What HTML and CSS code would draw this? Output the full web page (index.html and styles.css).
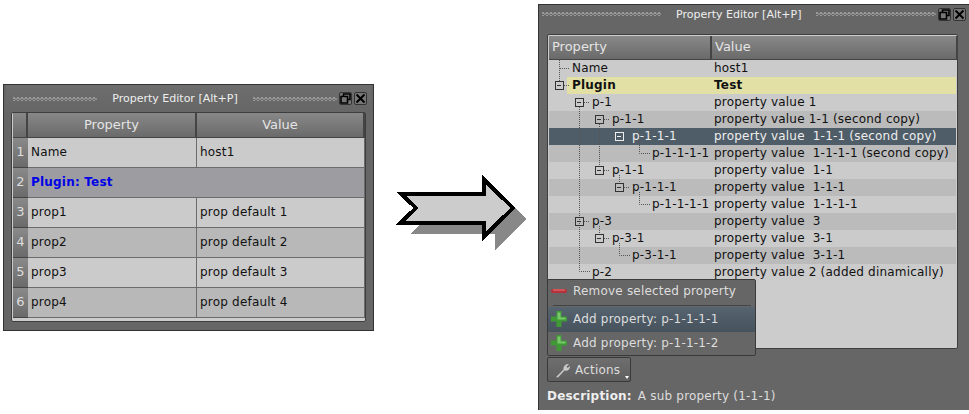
FILE: index.html
```html
<!DOCTYPE html>
<html>
<head>
<title>Property Editor</title>
<link rel="stylesheet" href="styles.css">
</head>
<body>
    <!-- before: plain table -->
    <div class="window window_left">
        <div class="titlebar">
            <span class="grip"></span>
            <span class="title">Property Editor [Alt+P]</span>
            <span class="grip"></span>
            <span class="win_btn"><svg width="11" height="11" viewBox="0 0 11 11"><path d="M3.5 3V1H10V6.5H7.5M1 3.5H7.5V10H1Z" fill="none" stroke="#000" stroke-width="1.6"/></svg></span>
            <span class="win_btn"><svg width="11" height="11" viewBox="0 0 11 11"><path d="M1.5 1.5L9.5 9.5M9.5 1.5L1.5 9.5" stroke="#000" stroke-width="2"/></svg></span>
        </div>
        <div class="frame">
            <div class="plain_table">
                <div class="head"></div><div class="head">Property</div><div class="head">Value</div>
                <div class="num">1</div><div class="cell">Name</div><div class="cell">host1</div>
                <div class="num">2</div><div class="cell group">Plugin: Test</div>
                <div class="num">3</div><div class="cell">prop1</div><div class="cell">prop default 1</div>
                <div class="num">4</div><div class="cell alt">prop2</div><div class="cell alt">prop default 2</div>
                <div class="num">5</div><div class="cell">prop3</div><div class="cell">prop default 3</div>
                <div class="num">6</div><div class="cell alt">prop4</div><div class="cell alt">prop default 4</div>
            </div>
        </div>
    </div>

    <svg class="arrow" width="140" height="80" viewBox="390 170 140 80" shape-rendering="crispEdges">
        <path d="M409 233L424 219H495V189L526 218L494 249V233Z" fill="#888"/>
        <path d="M400 192.500H483V178.500L512 207L483 235.500V221.500H400L415 207Z" fill="#ccc" stroke="#000" stroke-width="4"/>
    </svg>

    <!-- after: tree -->
    <div class="window window_right">
        <div class="titlebar">
            <span class="grip"></span>
            <span class="title">Property Editor [Alt+P]</span>
            <span class="grip"></span>
            <span class="win_btn"><svg width="11" height="11" viewBox="0 0 11 11"><path d="M3.5 3V1H10V6.5H7.5M1 3.5H7.5V10H1Z" fill="none" stroke="#000" stroke-width="1.6"/></svg></span>
            <span class="win_btn"><svg width="11" height="11" viewBox="0 0 11 11"><path d="M1.5 1.5L9.5 9.5M9.5 1.5L1.5 9.5" stroke="#000" stroke-width="2"/></svg></span>
        </div>
        <div class="frame tree_frame">
            <div class="tree_head">
                <div class="head">Property</div><div class="head">Value</div>
            </div>
            <div class="tree">
                <div class="row"><div class="lv0">Name</div><div>host1</div></div>
                <div class="row plugin"><div class="lv0">Plugin</div><div>Test</div></div>
                <div class="row"><div class="lv1">p-1</div><div>property value 1</div></div>
                <div class="row dark"><div class="lv2">p-1-1</div><div>property value 1-1 (second copy)</div></div>
                <div class="row selected"><div class="lv3">p-1-1-1</div><div>property value  1-1-1 (second copy)</div></div>
                <div class="row dark"><div class="lv4">p-1-1-1-1</div><div>property value  1-1-1-1 (second copy)</div></div>
                <div class="row"><div class="lv2">p-1-1</div><div>property value  1-1</div></div>
                <div class="row dark"><div class="lv3">p-1-1-1</div><div>property value  1-1-1</div></div>
                <div class="row"><div class="lv4">p-1-1-1-1</div><div>property value  1-1-1-1</div></div>
                <div class="row dark"><div class="lv1">p-3</div><div>property value  3</div></div>
                <div class="row"><div class="lv2">p-3-1</div><div>property value  3-1</div></div>
                <div class="row dark"><div class="lv3">p-3-1-1</div><div>property value  3-1-1</div></div>
                <div class="row"><div class="lv1">p-2</div><div>property value 2 (added dinamically)</div></div>
                <svg class="tree_lines" width="110" height="221" viewBox="549 60 110 221">
                    <path class="dots" d="M559.500 60V81M560 68.500H570M564 85.500H570M579.500 107V271.500H590M584 102.500H590M599.500 124V165M604 119.500H610M639.500 141V153.500H650M604 170.500H610M619.500 175V182M624 187.500H630M639.500 192V204.500H650M584 221.500H590M599.500 226V233M604 238.500H610M619.500 243V255.500H630"/>
                    <path class="box" d="M555 81.500h8v8h-8zM557 85.500h4M575 98.500h8v8h-8zM577 102.500h4M595 115.500h8v8h-8zM597 119.500h4M595 166.500h8v8h-8zM597 170.500h4M615 183.500h8v8h-8zM617 187.500h4M575 217.500h8v8h-8zM577 221.500h4M595 234.500h8v8h-8zM597 238.500h4"/>
                    <path class="box box_sel" d="M615 132.500h8v8h-8zM617 136.500h4"/>
                </svg>
            </div>
        </div>
        <div class="actions_bar">
            <div class="menu">
                <div class="menu_item">
                    <svg width="18" height="10" viewBox="0 0 18 10"><rect x="1" y="3" width="16" height="4" rx="2" fill="#b8303a"/><rect x="3" y="3.500" width="12" height="1" fill="#e87a7a"/></svg>
                    <span>Remove selected property</span>
                </div>
                <div class="menu_sep"></div>
                <div class="menu_item active">
                    <svg width="18" height="18" viewBox="0 0 18 18"><path d="M6.500 1H11.500V6.500H17V11.500H11.500V17H6.500V11.500H1V6.500H6.500Z" fill="#3f9a36"/><path d="M7.500 2.500H10.500V7.500H15.500V9.500H7.500Z" fill="#78c868"/></svg>
                    <span>Add property: p-1-1-1-1</span>
                </div>
                <div class="menu_item">
                    <svg width="18" height="18" viewBox="0 0 18 18"><path d="M6.500 1H11.500V6.500H17V11.500H11.500V17H6.500V11.500H1V6.500H6.500Z" fill="#3f9a36"/><path d="M7.500 2.500H10.500V7.500H15.500V9.500H7.500Z" fill="#78c868"/></svg>
                    <span>Add property: p-1-1-1-2</span>
                </div>
            </div>
            <div class="actions_btn">
                <svg width="16" height="16" viewBox="0 0 16 16"><path d="M1 15L8.500 7.500C8 4.500 10.500 1.500 14 2L11.500 4.500L12.500 6L15 4C15 7.500 12.500 9.500 9.500 8.500L3 15.500Z" fill="#c8c8c8"/></svg>
                <span>Actions</span>
                <i class="caret"></i>
            </div>
        </div>
        <div class="description"><b>Description:</b><span>A sub property (1-1-1)</span></div>
    </div>
</body>
</html>
```

FILE: styles.css
```css
html, body {
    margin: 0;
    height: 100%;
    overflow: hidden;
    background-color: #fff;
}
body {
    font-family: "DejaVu Sans", sans-serif;
    font-size: 12px;
    letter-spacing: 0.2px;
}

.window {
    position: absolute;
    box-sizing: border-box;
    background-color: #666;
    border: 1px solid #333;
    color: #111;
}
.window_left {
    left: 3px;
    top: 84px;
    width: 371px;
    height: 247px;
    padding: 0 7px;
}
.window_right {
    left: 538px;
    top: 4px;
    width: 440px;
    height: 406px;
    padding: 0 8px;
    border-bottom: none;
}

.titlebar {
    display: flex;
    align-items: center;
    height: 27px;
    gap: 2px;
    color: #eee;
    font-size: 11px;
    letter-spacing: 0;
    white-space: nowrap;
}
.window_left .titlebar {
    background: linear-gradient(#6e6e6e, #666);
    margin: 0 -5px;
    padding: 0 4px 0 7px;
}
.window_right .titlebar {
    height: 18px;
    margin: 0 -7px 11px;
    padding: 0 0 0 2px;
}
.grip {
    flex: 1;
    height: 4px;
    background-image:
        radial-gradient(circle at 1px 1px, #999 0, #999 1px, transparent 1px),
        radial-gradient(circle at 1px 1px, #8c8c8c 0, #8c8c8c 1px, transparent 1px);
    background-size: 4px 3px;
    background-position: 0 0, 2px 1px;
}
.window_right .grip {
    flex: none;
    width: 120px;
}
.window_right .grip:first-child {
    width: 119px;
}
.title {
    padding: 0 13px;
}
.win_btn {
    display: flex;
    align-items: center;
    justify-content: center;
    box-sizing: border-box;
    width: 13px;
    height: 13px;
    border: 1px solid #333;
    border-radius: 2px;
    background-color: #777;
}

.frame {
    box-sizing: border-box;
    width: 355px;
    height: 210px;
    padding: 0 1px;
    background-color: #ccc;
    border: 1px solid #3e3e3e;
    border-radius: 2px;
}
.plain_table {
    display: grid;
    grid-template-columns: 15px 169px 168px;
    grid-template-rows: 25px;
    grid-auto-rows: 30px;
    background-color: #6c6c6c;
}
.head {
    display: flex;
    align-items: center;
    justify-content: center;
    box-sizing: border-box;
    padding-bottom: 2px;
    color: #e4e4e4;
    font-size: 13px;
    letter-spacing: 0;
    background: linear-gradient(#888, #6a6a6a);
    border-right: 2px solid #444;
    border-bottom: 1px solid #444;
}
.num {
    display: flex;
    align-items: center;
    justify-content: center;
    box-sizing: border-box;
    padding-bottom: 2px;
    color: #ddd;
    font-size: 13px;
    background: linear-gradient(#8a8a8a, #6a6a6a);
    border-bottom: 1px solid #444;
}
.cell {
    display: flex;
    align-items: center;
    box-sizing: border-box;
    padding: 0 0 2px 3px;
    background-color: #cbcbcb;
    border-right: 1px solid #6c6c6c;
    border-bottom: 1px solid #6c6c6c;
}
.cell.alt {
    background-color: #b8b8b8;
}
.cell.group {
    grid-column: span 2;
    background-color: #9d9da1;
    color: #0000e6;
    font-weight: bold;
}

.tree_frame {
    width: 411px;
    height: 315px;
    padding: 1px;
}
.tree_head {
    display: grid;
    grid-template-columns: 163px 246px;
}
.tree_head .head {
    justify-content: flex-start;
    padding-left: 3px;
    height: 24px;
}
.tree {
    position: relative;
}
.row {
    display: grid;
    grid-template-columns: 163px 246px;
    height: 17px;
    line-height: 17px;
    white-space: pre;
    background-color: #cbcbcb;
    color: #111;
}
.row > div:last-child {
    padding-left: 2px;
}
.row.dark {
    background-color: #bbb;
}
.row.selected {
    background-color: #4f5d68;
    color: #eee;
}
.row.plugin {
    background: linear-gradient(to right, #cbcbcb 18px, #e3e0a5 18px);
    font-weight: bold;
}
.lv0 { padding-left: 23px; }
.lv1 { padding-left: 43px; }
.lv2 { padding-left: 63px; }
.lv3 { padding-left: 83px; }
.lv4 { padding-left: 103px; }

.tree_lines {
    position: absolute;
    left: 0;
    top: 0;
}
.dots {
    fill: none;
    stroke: #555;
    stroke-dasharray: 1 1;
}
.box {
    fill: none;
    stroke: #333;
    shape-rendering: crispEdges;
}
.box_sel {
    stroke: #eee;
}

.actions_bar {
    position: relative;
    width: 84px;
    margin-top: 8px;
}
.menu {
    position: absolute;
    left: 0;
    bottom: 100%;
    margin-bottom: 1px;
    box-sizing: border-box;
    width: 209px;
    height: 77px;
    background-color: #666;
    border: 1px solid #3a3a3a;
    border-radius: 2px;
    color: #ddd;
}
.menu_item {
    display: flex;
    align-items: center;
    gap: 5px;
    box-sizing: border-box;
    height: 24px;
    padding: 0 0 2px 2px;
    white-space: nowrap;
}
.menu_item svg {
    flex: none;
}
.menu_item.active {
    height: 25px;
    background: linear-gradient(#566470, #46525c);
}
.menu_sep {
    height: 1px;
    margin: 1px 4px 1px 5px;
    background-color: #444;
}
.actions_btn {
    position: relative;
    display: flex;
    align-items: center;
    gap: 4px;
    box-sizing: border-box;
    height: 25px;
    padding-left: 7px;
    color: #ddd;
    background: linear-gradient(#6e6e6e, #5f5f5f);
    border: 1px solid #3a3a3a;
    border-radius: 2px;
}
.caret {
    position: absolute;
    right: 1px;
    bottom: 2px;
    width: 0;
    height: 0;
    border: 2px solid transparent;
    border-top: 3px solid #fff;
    border-bottom: none;
}
.description {
    display: flex;
    gap: 6px;
    margin-top: 7px;
    color: #ddd;
}
.description b {
    color: #eee;
}

.arrow {
    position: absolute;
    left: 391px;
    top: 171px;
}
```
